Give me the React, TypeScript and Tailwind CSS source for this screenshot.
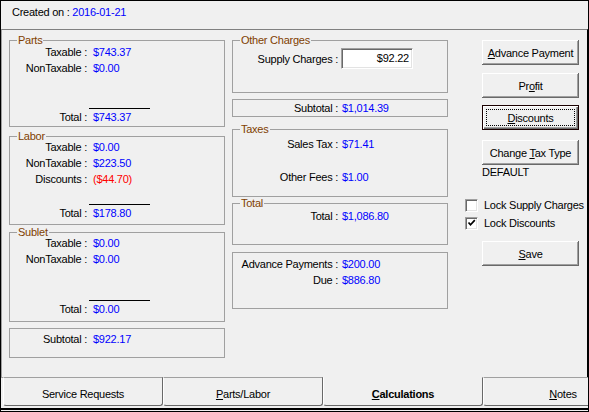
import React from 'react';

type GBProps = { label?: string; className?: string; children?: React.ReactNode };

function GroupBox({ label, className = '', children }: GBProps) {
  return (
    <div className={`relative shrink-0 border border-[#a0a0a0] ${className}`}>
      {label && (
        <span className="absolute left-[7px] top-[-7px] h-[12px] bg-[#f0f0f0] px-[1px] leading-[12px] text-[#804000]">
          {label}
        </span>
      )}
      {children}
    </div>
  );
}

function LRow({ label, value, red }: { label: string; value: string; red?: boolean }) {
  return (
    <div className="flex h-[16px] leading-[16px]">
      <span className="w-[77px] shrink-0 text-right">{label}</span>
      <span className={`ml-[6px] ${red ? 'text-[#ff0000]' : 'text-[#0000ff]'}`}>{value}</span>
    </div>
  );
}

function MRow({ label, value }: { label: string; value: string }) {
  return (
    <div className="flex h-[16px] leading-[16px]">
      <span className="w-[105px] shrink-0 text-right">{label}</span>
      <span className="ml-[4px] text-[#0000ff]">{value}</span>
    </div>
  );
}

function TotalLine() {
  return <div className="ml-[79px] h-px w-[61px] bg-black" />;
}

function Btn({ children, focused, className = '' }: { children: React.ReactNode; focused?: boolean; className?: string }) {
  if (focused) {
    return (
      <div className={`relative ml-[34px] flex h-[25px] w-[97px] items-center justify-center border border-[#1a0000] bg-[#f0f0f0] shadow-[inset_1px_1px_0_#ffffff,inset_-1px_-1px_0_#696969,inset_-2px_-2px_0_#a0a0a0] ${className}`}>
        <div className="absolute left-[3px] right-[3px] top-[3px] bottom-[3px] border border-dotted border-black" />
        <span className="leading-[16px]">{children}</span>
      </div>
    );
  }
  return (
    <div className={`ml-[34px] flex h-[25px] w-[97px] items-center justify-center bg-[#f0f0f0] shadow-[inset_-1px_-1px_0_#696969,inset_1px_1px_0_#ffffff,inset_-2px_-2px_0_#a0a0a0] ${className}`}>
      <span className="leading-[16px]">{children}</span>
    </div>
  );
}

function Check({ checked, label, className = '' }: { checked?: boolean; label: string; className?: string }) {
  return (
    <div className={`ml-[17px] flex h-[16px] items-center leading-[16px] ${className}`}>
      <div className="h-[13px] w-[13px] shrink-0 border border-t-[#a0a0a0] border-l-[#a0a0a0] border-r-white border-b-white bg-white shadow-[inset_1px_1px_0_#696969,inset_-1px_-1px_0_#e3e3e3]">
        {checked && (
          <svg width="11" height="11" viewBox="0 0 11 11" className="block">
            <path d="M2.5 4.5 L4.5 6.8 L8.8 2.2" fill="none" stroke="#000" strokeWidth="1.7" />
          </svg>
        )}
      </div>
      <span className="ml-[6px]">{label}</span>
    </div>
  );
}

function Tab({ children, selected }: { children: React.ReactNode; selected?: boolean }) {
  return (
    <div
      className={`h-[29px] w-[160px] shrink-0 rounded-b-[3px] border-b border-l border-r border-t border-b-[#696969] border-l-white border-r-[#696969] pt-[8px] text-center leading-[16px] ${
        selected ? 'border-t-[#f0f0f0] font-bold' : 'border-t-[#a0a0a0]'
      }`}
    >
      {children}
    </div>
  );
}

export default function App() {
  return (
    <div className="flex h-[412px] w-[589px] flex-col overflow-hidden border border-black bg-[#f0f0f0] font-['Liberation_Sans',Arial,sans-serif] text-[11px] tracking-[-0.25px] text-black">
      {/* header */}
      <div className="h-[28px] shrink-0 pl-[11px] pt-[3px] leading-[16px]">
        Created on : <span className="text-[#0000ff]">2016-01-21</span>
      </div>

      {/* body */}
      <div className="flex h-[348px] shrink-0 border-l border-r border-t border-l-[#a0a0a0] border-r-black border-t-[#808080] pl-[7px]">
        {/* left column */}
        <div className="flex w-[216px] shrink-0 flex-col">
          <GroupBox label="Parts" className="mt-[10px] flex h-[87px] flex-col pt-[3px] pb-[1px]">
            <LRow label="Taxable :" value="$743.37" />
            <LRow label="NonTaxable :" value="$0.00" />
            <div className="mt-auto">
              <TotalLine />
              <LRow label="Total :" value="$743.37" />
            </div>
          </GroupBox>
          <GroupBox label="Labor" className="mt-[9px] flex h-[89px] flex-col pt-[2px] pb-[3px]">
            <LRow label="Taxable :" value="$0.00" />
            <LRow label="NonTaxable :" value="$223.50" />
            <LRow label="Discounts :" value="($44.70)" red />
            <div className="mt-auto">
              <TotalLine />
              <LRow label="Total :" value="$178.80" />
            </div>
          </GroupBox>
          <GroupBox label="Sublet" className="mt-[7px] flex h-[90px] flex-col pt-[2px] pb-[4px]">
            <LRow label="Taxable :" value="$0.00" />
            <LRow label="NonTaxable :" value="$0.00" />
            <div className="mt-auto">
              <TotalLine />
              <LRow label="Total :" value="$0.00" />
            </div>
          </GroupBox>
          <GroupBox className="mt-[6px] h-[30px] pt-[2px]">
            <LRow label="Subtotal :" value="$922.17" />
          </GroupBox>
        </div>

        {/* middle column */}
        <div className="ml-[7px] flex w-[216px] shrink-0 flex-col">
          <GroupBox label="Other Charges" className="mt-[10px] h-[53px] pt-[7px]">
            <div className="flex items-center">
              <span className="w-[105px] shrink-0 text-right leading-[16px]">Supply Charges :</span>
              <div className="ml-[3px] flex h-[21px] w-[72px] items-center justify-end border border-b-white border-l-[#a0a0a0] border-r-white border-t-[#a0a0a0] bg-white pr-[3px] shadow-[inset_1px_1px_0_#696969,inset_-1px_-1px_0_#e3e3e3]">
                $92.22
              </div>
            </div>
          </GroupBox>
          <GroupBox className="mt-[6px] h-[18px]">
            <MRow label="Subtotal :" value="$1,014.39" />
          </GroupBox>
          <GroupBox label="Taxes" className="mt-[12px] h-[68px] pt-[6px]">
            <MRow label="Sales Tax :" value="$71.41" />
            <div className="mt-[17px]">
              <MRow label="Other Fees :" value="$1.00" />
            </div>
          </GroupBox>
          <GroupBox label="Total" className="mt-[6px] h-[42px] pt-[4px]">
            <MRow label="Total :" value="$1,086.80" />
          </GroupBox>
          <GroupBox className="mt-[7px] h-[57px] pt-[3px]">
            <MRow label="Advance Payments :" value="$200.00" />
            <MRow label="Due :" value="$886.80" />
          </GroupBox>
        </div>

        {/* right column */}
        <div className="flex flex-1 flex-col">
          <Btn className="mt-[10px]">
            <u className="underline-offset-[1px]">A</u>dvance Payment
          </Btn>
          <Btn className="mt-[8px]">
            Pr<u className="underline-offset-[1px]">o</u>fit
          </Btn>
          <Btn focused className="mt-[7px]">
            <u className="underline-offset-[1px]">D</u>iscounts
          </Btn>
          <Btn className="mt-[10px]">
            Change <u className="underline-offset-[1px]">T</u>ax Type
          </Btn>
          <div className="ml-[34px] h-[14px] leading-[14px]">DEFAULT</div>
          <Check label="Lock Supply Charges" className="mt-[18px]" />
          <Check label="Lock Discounts" checked className="mt-[2px]" />
          <Btn className="mt-[10px]">
            <u className="underline-offset-[1px]">S</u>ave
          </Btn>
        </div>
      </div>

      {/* tab strip */}
      <div className="flex h-[33px] shrink-0 flex-col">
        <div className="flex h-[29px] shrink-0">
          <div className="h-[29px] w-[2px] shrink-0 border-t border-t-[#a0a0a0]" />
          <Tab>Service Requests</Tab>
          <Tab>
            <u className="underline-offset-[1px]">P</u>arts/Labor
          </Tab>
          <Tab selected>
            <u className="underline-offset-[1px]">C</u>alculations
          </Tab>
          <Tab>
            <u className="underline-offset-[1px]">N</u>otes
          </Tab>
        </div>
        <div className="h-[2px] shrink-0" />
        <div className="h-[2px] shrink-0 bg-black" />
      </div>
    </div>
  );
}
